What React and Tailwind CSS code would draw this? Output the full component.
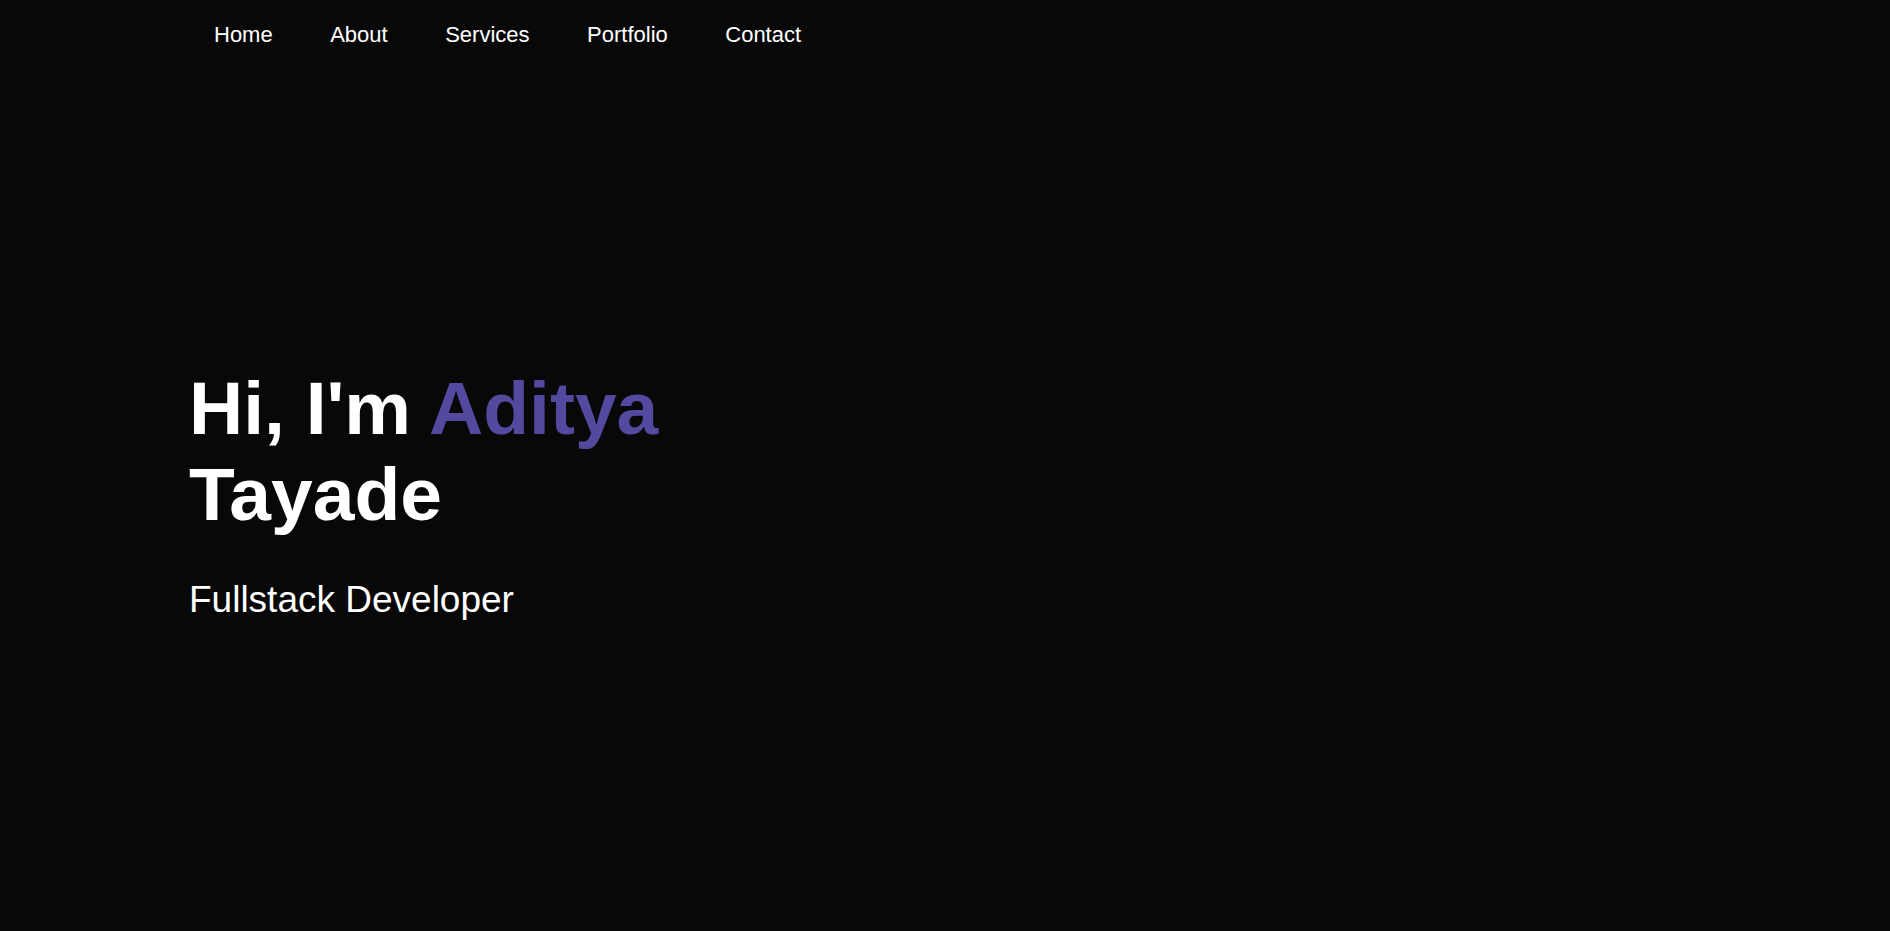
import React from 'react';

const links = ['Home', 'About', 'Services', 'Portfolio', 'Contact'];

export default function App() {
    return (
        <div className="min-h-[931px] bg-[#080808] text-white font-['Liberation_Sans',Arial,sans-serif] pl-[189px]">
            {/* Nav */}
            <nav className="pt-[22px] pl-[25px]">
                <ul className="flex gap-[57.5px] text-[22px] leading-[25px]">
                    {links.map((link) => (
                        <li key={link}>
                            <a href="#" className="text-white">{link}</a>
                        </li>
                    ))}
                </ul>
            </nav>

            {/* Hero */}
            <section className="pt-[318px]">
                <h1 className="text-[75px] font-bold leading-[normal]">
                    Hi, I'm <span className="text-[#534aa0]">Aditya</span>
                    <br />
                    Tayade
                </h1>
                <p className="mt-[42px] text-[37px] leading-[normal]">Fullstack Developer</p>
            </section>
        </div>
    );
}
